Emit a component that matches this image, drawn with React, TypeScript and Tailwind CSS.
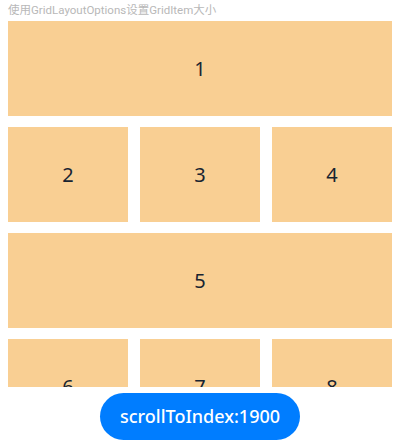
import React from 'react';

const items = [1, 2, 3, 4, 5, 6, 7, 8];
const isWide = (n: number) => (n - 1) % 4 === 0;

export default function App() {
  return (
    <div
      className="w-[400px] h-[443px] bg-white flex flex-col overflow-hidden"
      style={{ fontFamily: '"Noto Sans", "Noto Sans CJK SC", sans-serif' }}
    >
      <div
        className="h-[21px] pl-2 pt-[3px] text-[11.5px] leading-[14px] text-[#b8b8b8] whitespace-nowrap"
        style={{ fontFamily: 'Roboto, "Noto Sans CJK SC", sans-serif' }}
      >
        使用GridLayoutOptions设置GridItem大小
      </div>
      <div className="h-[366px] overflow-hidden px-2">
        <div className="grid grid-cols-3 auto-rows-[95px] gap-x-3 gap-y-[11px]">
          {items.map((n) => (
            <div
              key={n}
              className={`${isWide(n) ? 'col-span-3' : ''} bg-[#F9CF93] flex items-center justify-center text-[20px] text-[#182431]`}
            >
              {n}
            </div>
          ))}
        </div>
      </div>
      <div className="flex justify-center pt-[6px]">
        <button className="w-[200px] h-[47px] rounded-full bg-[#007DFF] text-white text-[18px] font-medium">
          scrollToIndex:1900
        </button>
      </div>
    </div>
  );
}
